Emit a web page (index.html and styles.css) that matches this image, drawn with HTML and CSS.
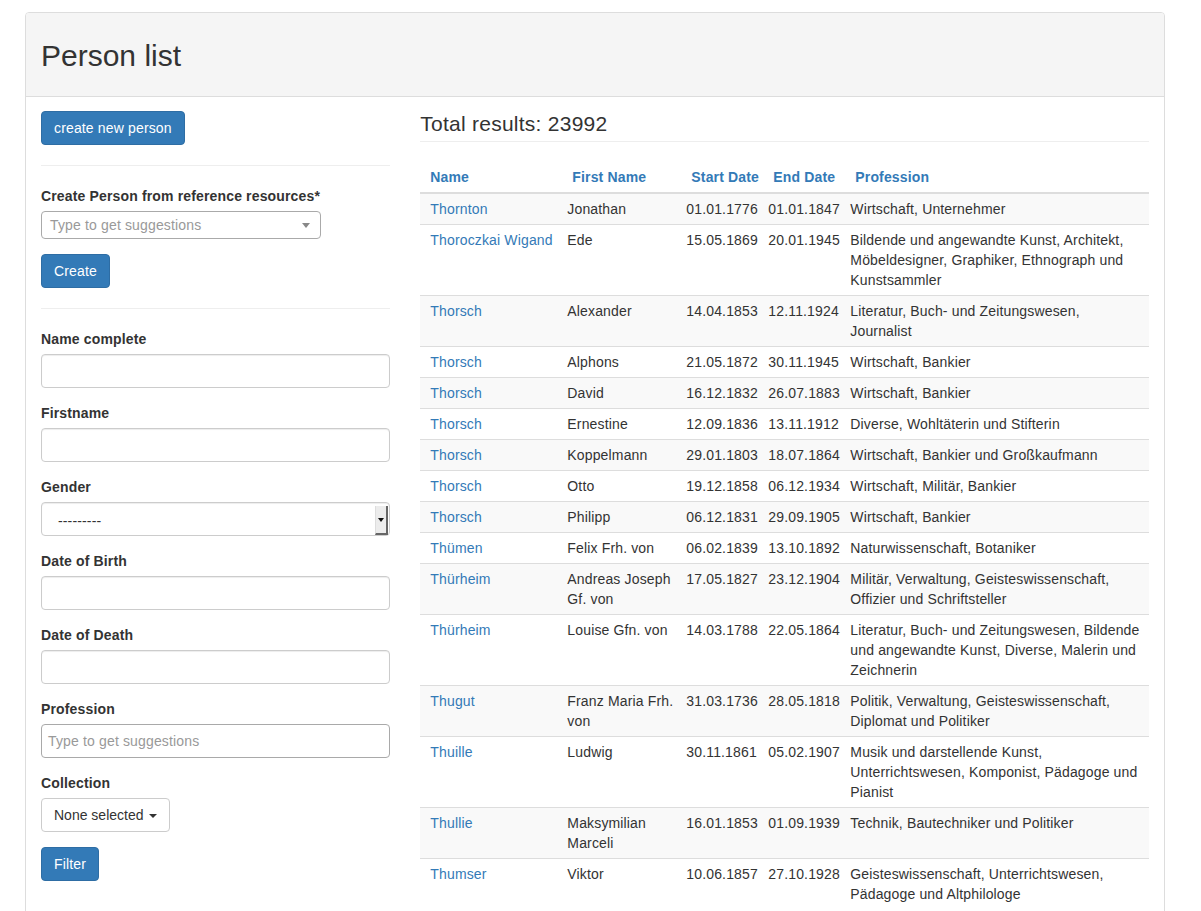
FILE: index.html
```html
<!DOCTYPE html>
<html lang="en">
<head>
<meta charset="utf-8">
<title>Person list</title>
<link rel="stylesheet" href="styles.css">
</head>
<body>
<div class="panel">
  <div class="panel-heading">
    <h2 class="panel-title">Person list</h2>
  </div>
  <div class="panel-body">
    <div class="sidebar">
      <button class="btn btn-primary">create new person</button>
      <hr class="divider">
      <div class="group">
        <label class="label">Create Person from reference resources*</label>
        <div class="select2">
          <span class="placeholder">Type to get suggestions</span>
          <span class="select2-arrow"></span>
        </div>
      </div>
      <button class="btn btn-primary">Create</button>
      <hr class="divider">
      <div class="form-group">
        <label class="label">Name complete</label>
        <div class="form-control"></div>
      </div>
      <div class="form-group">
        <label class="label">Firstname</label>
        <div class="form-control"></div>
      </div>
      <div class="form-group">
        <label class="label">Gender</label>
        <div class="native-select">
          <span class="native-select-text">---------</span>
          <span class="native-select-btn"><span class="tri"></span></span>
        </div>
      </div>
      <div class="form-group">
        <label class="label">Date of Birth</label>
        <div class="form-control"></div>
      </div>
      <div class="form-group">
        <label class="label">Date of Death</label>
        <div class="form-control"></div>
      </div>
      <div class="form-group">
        <label class="label">Profession</label>
        <div class="auto-input"><span class="placeholder">Type to get suggestions</span></div>
      </div>
      <div class="form-group">
        <label class="label">Collection</label>
        <button class="btn btn-default">None selected <span class="caret"></span></button>
      </div>
      <button class="btn btn-primary">Filter</button>
    </div>
    <div class="results">
      <h3 class="results-title">Total results: 23992</h3>
      <table class="table">
        <colgroup>
          <col class="c-name"><col class="c-first"><col class="c-date"><col class="c-date"><col>
        </colgroup>
        <thead>
          <tr><th>Name</th><th>First Name</th><th>Start Date</th><th>End Date</th><th>Profession</th></tr>
        </thead>
        <tbody>
          <tr><td><a>Thornton</a></td><td>Jonathan</td><td>01.01.1776</td><td>01.01.1847</td><td>Wirtschaft, Unternehmer</td></tr>
          <tr><td><a>Thoroczkai Wigand</a></td><td>Ede</td><td>15.05.1869</td><td>20.01.1945</td><td>Bildende und angewandte Kunst, Architekt, Möbeldesigner, Graphiker, Ethnograph und Kunstsammler</td></tr>
          <tr><td><a>Thorsch</a></td><td>Alexander</td><td>14.04.1853</td><td>12.11.1924</td><td>Literatur, Buch- und Zeitungswesen, Journalist</td></tr>
          <tr><td><a>Thorsch</a></td><td>Alphons</td><td>21.05.1872</td><td>30.11.1945</td><td>Wirtschaft, Bankier</td></tr>
          <tr><td><a>Thorsch</a></td><td>David</td><td>16.12.1832</td><td>26.07.1883</td><td>Wirtschaft, Bankier</td></tr>
          <tr><td><a>Thorsch</a></td><td>Ernestine</td><td>12.09.1836</td><td>13.11.1912</td><td>Diverse, Wohltäterin und Stifterin</td></tr>
          <tr><td><a>Thorsch</a></td><td>Koppelmann</td><td>29.01.1803</td><td>18.07.1864</td><td>Wirtschaft, Bankier und Großkaufmann</td></tr>
          <tr><td><a>Thorsch</a></td><td>Otto</td><td>19.12.1858</td><td>06.12.1934</td><td>Wirtschaft, Militär, Bankier</td></tr>
          <tr><td><a>Thorsch</a></td><td>Philipp</td><td>06.12.1831</td><td>29.09.1905</td><td>Wirtschaft, Bankier</td></tr>
          <tr><td><a>Thümen</a></td><td>Felix Frh. von</td><td>06.02.1839</td><td>13.10.1892</td><td>Naturwissenschaft, Botaniker</td></tr>
          <tr><td><a>Thürheim</a></td><td>Andreas Joseph Gf. von</td><td>17.05.1827</td><td>23.12.1904</td><td>Militär, Verwaltung, Geisteswissenschaft, Offizier und Schriftsteller</td></tr>
          <tr><td><a>Thürheim</a></td><td>Louise Gfn. von</td><td>14.03.1788</td><td>22.05.1864</td><td>Literatur, Buch- und Zeitungswesen, Bildende und angewandte Kunst, Diverse, Malerin und Zeichnerin</td></tr>
          <tr><td><a>Thugut</a></td><td>Franz Maria Frh. von</td><td>31.03.1736</td><td>28.05.1818</td><td>Politik, Verwaltung, Geisteswissenschaft, Diplomat und Politiker</td></tr>
          <tr><td><a>Thuille</a></td><td>Ludwig</td><td>30.11.1861</td><td>05.02.1907</td><td>Musik und darstellende Kunst, Unterrichtswesen, Komponist, Pädagoge und Pianist</td></tr>
          <tr><td><a>Thullie</a></td><td>Maksymilian Marceli</td><td>16.01.1853</td><td>01.09.1939</td><td>Technik, Bautechniker und Politiker</td></tr>
          <tr><td><a>Thumser</a></td><td>Viktor</td><td>10.06.1857</td><td>27.10.1928</td><td>Geisteswissenschaft, Unterrichtswesen, Pädagoge und Altphilologe</td></tr>
        </tbody>
      </table>
    </div>
  </div>
</div>
</body>
</html>
```
FILE: styles.css
```css
* { box-sizing: border-box; }
html, body { margin: 0; padding: 0; }
body {
  font-family: "Liberation Sans", Arial, sans-serif;
  font-size: 14px;
  line-height: 20px;
  letter-spacing: 0.15px;
  color: #333;
  background: #fff;
  padding: 12px 0 0 25px;
}
.panel {
  width: 1140px;
  border: 1px solid #ddd;
  border-radius: 4px;
  background: #fff;
}
.panel-heading {
  background: #f5f5f5;
  border-bottom: 1px solid #ddd;
  border-radius: 3px 3px 0 0;
  padding: 26px 15px 24px;
}
.panel-title {
  margin: 0;
  font-size: 30px;
  line-height: 33px;
  font-weight: 500;
  letter-spacing: 0;
  color: #333;
}
.panel-body {
  padding: 14px 15px 15px;
  display: grid;
  grid-template-columns: calc((100% + 30px) / 3 - 30px) 1fr;
  column-gap: 30px;
  align-items: start;
}
.sidebar { display: flex; flex-direction: column; align-items: flex-start; }
.sidebar > * { align-self: stretch; }
.sidebar > .btn { align-self: flex-start; }
.btn {
  display: inline-block;
  font-family: inherit;
  font-size: 14px;
  line-height: 20px;
  letter-spacing: 0.15px;
  padding: 6px 12px;
  border: 1px solid transparent;
  border-radius: 4px;
  cursor: pointer;
  margin: 0;
}
.btn-primary { background: #337ab7; border-color: #2e6da4; color: #fff; }
.btn-default { background: #fff; border-color: #ccc; color: #333; letter-spacing: 0; }
.divider {
  border: 0;
  border-top: 1px solid #eee;
  margin: 20px 0;
  height: 0;
}
.label {
  display: block;
  font-weight: 700;
  margin-bottom: 5px;
}
.group { margin-bottom: 15px; }
.form-group { margin-bottom: 15px; }
.select2 {
  width: 280px;
  height: 28px;
  border: 1px solid #aaa;
  border-radius: 4px;
  display: flex;
  align-items: center;
  justify-content: space-between;
  padding: 0 10px 0 8px;
}
.placeholder { color: #999; }
.select2-arrow {
  width: 0; height: 0;
  border-left: 4px solid transparent;
  border-right: 4px solid transparent;
  border-top: 5px solid #888;
  margin-top: 1px;
}
.form-control {
  height: 34px;
  border: 1px solid #ccc;
  border-radius: 4px;
  box-shadow: inset 0 1px 1px rgba(0,0,0,.075);
  background: #fff;
}
.auto-input {
  height: 34px;
  border: 1px solid #a9a9a9;
  border-radius: 4px;
  padding: 0 6px;
  display: flex;
  align-items: center;
}
.native-select {
  height: 34px;
  border: 1px solid #ccc;
  border-radius: 4px;
  box-shadow: inset 0 1px 1px rgba(0,0,0,.075);
  display: flex;
  align-items: stretch;
  padding: 3px 1px 0 16px;
}
.native-select-text { flex: 1; line-height: 30px; color: #333; }
.native-select-btn {
  width: 13px;
  background: #ececec;
  border-left: 1px solid #ddd;
  border-right: 2px solid #666;
  border-bottom: 2px solid #666;
  display: flex;
  align-items: center;
  justify-content: center;
}
.tri {
  width: 0; height: 0;
  border-left: 3px solid transparent;
  border-right: 3px solid transparent;
  border-top: 4px solid #111;
}
.caret {
  display: inline-block;
  width: 0; height: 0;
  margin-left: 2px;
  vertical-align: middle;
  border-top: 4px solid #333;
  border-left: 4px solid transparent;
  border-right: 4px solid transparent;
}
.results-title {
  margin: 0;
  font-size: 21px;
  line-height: 24px;
  font-weight: 500;
  letter-spacing: 0.25px;
  padding: 1px 0 5px;
  border-bottom: 1px solid #eee;
}
.table {
  width: 100%;
  margin-top: 20px;
  border-collapse: collapse;
  table-layout: fixed;
}
.c-name { width: 142px; }
.c-first { width: 119px; }
.c-date { width: 82px; }
.table th {
  text-align: left;
  color: #337ab7;
  font-weight: 700;
  white-space: nowrap;
  padding: 5px 5px 5px 10px;
  border-bottom: 2px solid #ddd;
  vertical-align: bottom;
}
.table td {
  padding: 5px;
  border-top: 1px solid #ddd;
  vertical-align: top;
}
.table td:first-child { padding-left: 10px; }
.table tbody tr:nth-child(odd) { background: #f9f9f9; }
.table a { color: #337ab7; text-decoration: none; }
```
